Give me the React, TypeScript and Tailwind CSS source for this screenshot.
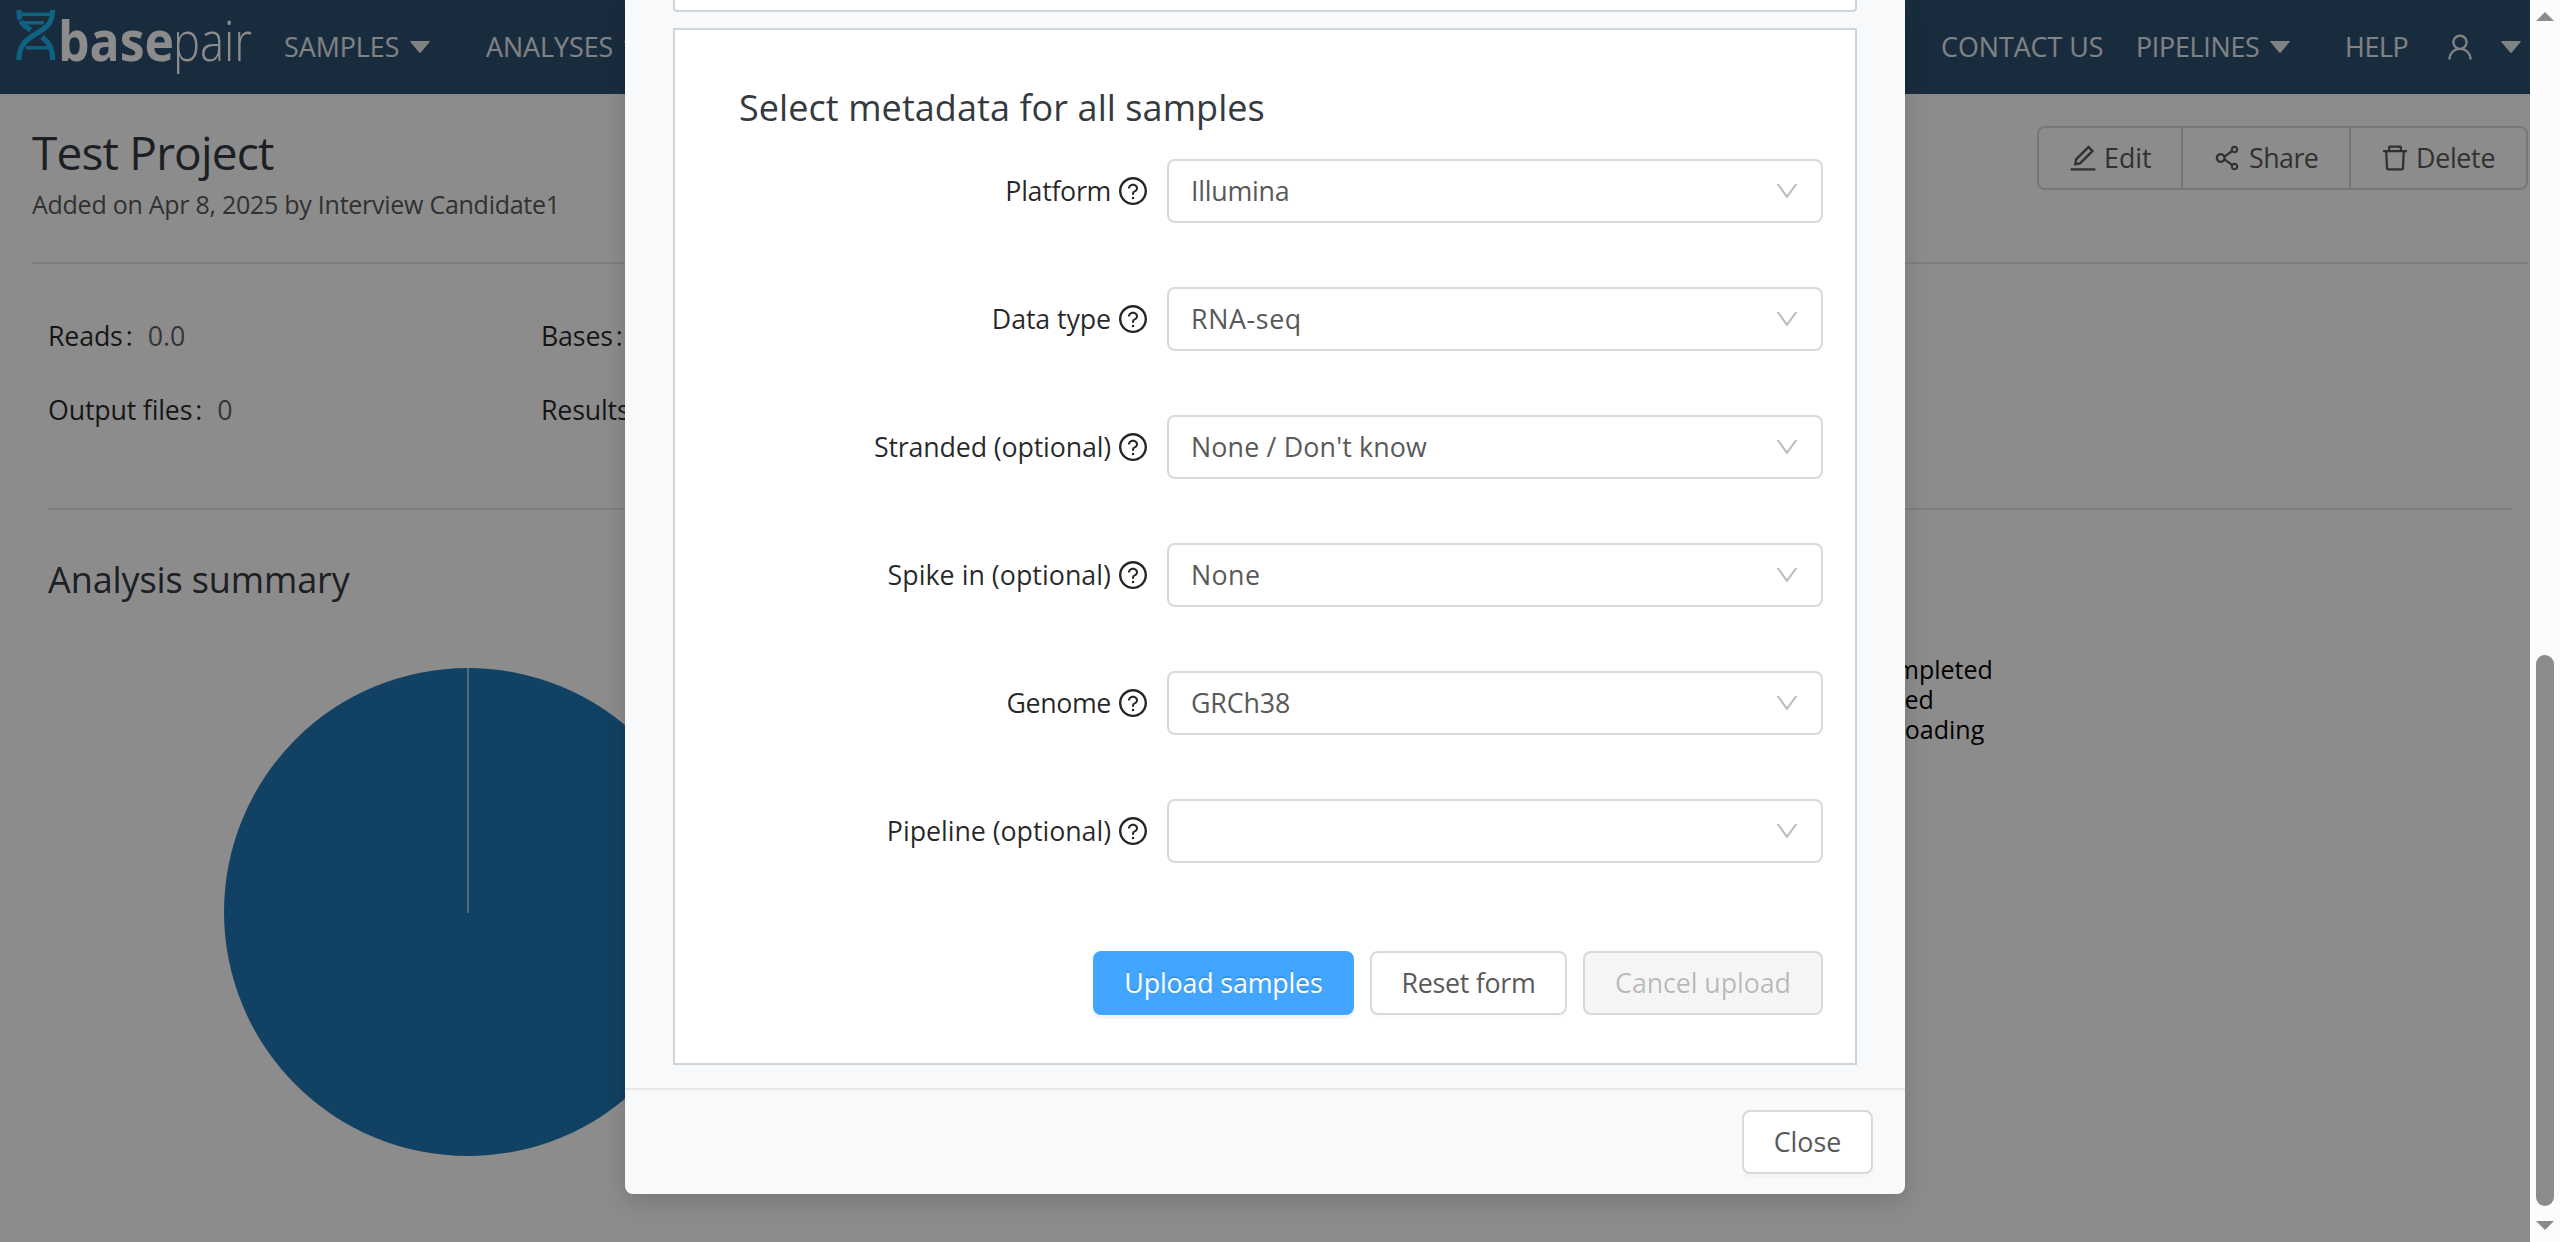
import React from "react";
import {
  AiOutlineDelete,
  AiOutlineDown,
  AiOutlineEdit,
  AiOutlineQuestionCircle,
  AiOutlineShareAlt,
  AiOutlineUser,
} from "react-icons/ai";

function Caret({ className = "" }: { className?: string }) {
  return (
    <svg className={`h-[12px] w-[20px] shrink-0 ${className}`} viewBox="0 0 20 12">
      <path d="M0.8 0H19.2Q20.2 0 19.6 0.9L10.8 11.5Q10 12.3 9.2 11.5L0.4 0.9Q-0.2 0 0.8 0Z" fill="currentColor" />
    </svg>
  );
}

function Logo() {
  return (
    <svg className="h-[94px] w-[284px] shrink-0" viewBox="0 0 284 94">
      <g fill="none" stroke="#1db2ec" strokeWidth="5.2">
        <path d="M19 10V13.5C19 16 19.8 18 20.8 19.3" />
        <path d="M52.6 10C52.6 23 47 27 38 32.5C28 38.5 18.8 44 18.8 60" />
        <path d="M20.8 21C23 25 27 27.8 30.8 30" />
        <path d="M42 37C48.5 42 52.6 47.5 52.6 60" />
        <path d="M18 14.3H52" strokeWidth="3.4" />
        <path d="M21 22.8H44" strokeWidth="3.4" />
        <path d="M26 47.8H50" strokeWidth="3.4" />
      </g>
      <text x="58" y="61" fontFamily="Open Sans, sans-serif" fontWeight="700" fontSize="55" textLength="116" lengthAdjust="spacingAndGlyphs" fill="#fff">
        base
      </text>
      <text x="173" y="61" fontFamily="Open Sans, sans-serif" fontWeight="300" fontSize="55" textLength="79" lengthAdjust="spacingAndGlyphs" fill="#fff">
        pair
      </text>
    </svg>
  );
}

function Header() {
  return (
    <header className="flex h-[94px] items-center bg-[#2f5071] text-white/90">
      <Logo />
      <nav className="flex items-center">
        <span className="flex w-[146px] items-center justify-between">
          SAMPLES <Caret />
        </span>
        <span className="ml-[56px] flex w-[158px] items-center justify-between">
          ANALYSES <Caret />
        </span>
      </nav>
      <nav className="mr-[9px] ml-auto flex items-center">
        <span className="w-[195px]">CONTACT US</span>
        <span className="flex w-[154px] items-center justify-between tracking-[-0.01em]">
          PIPELINES <Caret />
        </span>
        <span className="ml-[55px] w-[99px] tracking-[-0.013em]">HELP</span>
        <AiOutlineUser className="size-[32px]" />
        <Caret className="ml-[25px]" />
      </nav>
    </header>
  );
}

const actionBase = "flex h-[64px] items-center border-2 border-[#d9d9d9] pl-[28px]";

function Actions() {
  return (
    <div className="mt-[32px] flex">
      <button className={`${actionBase} w-[146px] gap-[5px] rounded-l-[8px]`}>
        <AiOutlineEdit className="size-[32px]" />
        Edit
      </button>
      <button className={`${actionBase} -ml-[2px] w-[170px] gap-[6px] tracking-[-0.02em]`}>
        <AiOutlineShareAlt className="size-[32px]" />
        Share
      </button>
      <button className={`${actionBase} -ml-[2px] w-[179px] gap-[5px] rounded-r-[8px] tracking-[-0.011em]`}>
        <AiOutlineDelete className="size-[32px]" />
        Delete
      </button>
    </div>
  );
}

function Stat({ label, value }: { label: string; value: string }) {
  return (
    <div className="flex w-[493px] leading-[40px]">
      <span className="tracking-[-0.007em] text-black/85">{label}</span>
      <span className="mr-[15px] ml-[3px] text-black/85">:</span>
      <span className="text-black/65">{value}</span>
    </div>
  );
}

function ProjectPage() {
  return (
    <div className="h-[1242px] w-[2530px] bg-white">
      <Header />
      <section className="mr-[2px] ml-[32px] flex h-[170px] justify-between border-b-2 border-[#e8e8e8]">
        <div className="pt-[28px]">
          <h1 className="text-[46px] leading-[60px] tracking-[-0.018em] text-[#343a40]">Test Project</h1>
          <p className="mt-[6px] text-[25px] leading-[32px] tracking-[-0.0105em]">
            Added on Apr 8, 2025 by Interview Candidate1
          </p>
        </div>
        <Actions />
      </section>
      <section className="mr-[18px] ml-[48px] h-[246px] border-b-2 border-[#e8e8e8] pt-[52px]">
        <div className="flex">
          <Stat label="Reads" value="0.0" />
          <Stat label="Bases" value="0.0" />
        </div>
        <div className="mt-[34px] flex">
          <Stat label="Output files" value="0" />
          <Stat label="Results" value="0" />
        </div>
      </section>
      <section className="pl-[48px]">
        <h2 className="pt-[45px] text-[36px] leading-[50px] tracking-[-0.003em] text-[#343a40]">Analysis summary</h2>
        <div className="mt-[49px] flex items-start pl-[176px]">
          <svg className="mt-[14px] size-[488px]" viewBox="0 0 488 488">
            <circle cx="244" cy="244" r="244" fill="#1f77b4" />
            <path d="M244 0V245" stroke="#98c0cc" strokeWidth="2" />
          </svg>
          <ul className="ml-[1153px] text-[25px] leading-[30px] text-black">
            <li>Completed</li>
            <li>Failed</li>
            <li>Uploading</li>
          </ul>
        </div>
      </section>
    </div>
  );
}

const fields = [
  { label: "Platform", value: "Illumina", labelClass: "tracking-[-0.012em]", valueClass: "tracking-[-0.009em]" },
  { label: "Data type", value: "RNA-seq", labelClass: "tracking-[-0.004em]", valueClass: "tracking-[0.023em]" },
  { label: "Stranded (optional)", value: "None / Don't know", labelClass: "tracking-[-0.006em]", valueClass: "tracking-[0.006em]" },
  { label: "Spike in (optional)", value: "None", labelClass: "tracking-[0.001em]", valueClass: "tracking-[0.015em]" },
  { label: "Genome", value: "GRCh38", labelClass: "tracking-[-0.015em]", valueClass: "tracking-[-0.005em]" },
  { label: "Pipeline (optional)", value: "", labelClass: "tracking-[-0.002em]", valueClass: "" },
];

const buttonBase = "h-[64px] rounded-[8px] border-2 text-center";

function UploadModal() {
  return (
    <div className="absolute top-0 left-[625px] flex h-[1194px] w-[1280px] flex-col rounded-b-[8px] bg-[#f8f9fb] shadow-[0_8px_24px_rgba(0,0,0,0.15)]">
      <div className="mx-[48px] h-[12px] rounded-b-[4px] border-2 border-t-0 border-[#ced4da] bg-white" />
      <div className="mx-[48px] mt-[16px] h-[1037px] border-2 border-[#ced4da] bg-white pt-[51px] pr-[32px] pl-[64px]">
        <h2 className="text-[36px] leading-[54px] tracking-[0.002em] text-[#343a40]">
          Select metadata for all samples
        </h2>
        <div className="mt-[24px] flex flex-col gap-[64px]">
          {fields.map((f) => (
            <div key={f.label} className="flex h-[64px] items-center justify-end">
              <label className={`text-black/85 ${f.labelClass}`}>{f.label}</label>
              <AiOutlineQuestionCircle className="mr-[18px] ml-[6px] size-[32px] text-black/85" />
              <div className="flex h-[64px] w-[656px] items-center justify-between rounded-[8px] border-2 border-[#d9d9d9] pr-[20px] pl-[22px]">
                <span className={f.valueClass}>{f.value}</span>
                <AiOutlineDown className="ml-auto size-[28px] text-black/25" />
              </div>
            </div>
          ))}
        </div>
        <div className="mt-[88px] flex justify-end gap-[16px]">
          <button className={`${buttonBase} w-[261px] border-[#42a5ff] bg-[#42a5ff] tracking-[-0.006em] text-white shadow-[0_4px_0_rgba(0,0,0,0.045)] [text-shadow:0_-2px_0_rgba(0,0,0,0.12)]`}>
            Upload samples
          </button>
          <button className={`${buttonBase} w-[197px] border-[#d9d9d9] tracking-[-0.01em] shadow-[0_4px_0_rgba(0,0,0,0.016)]`}>
            Reset form
          </button>
          <button className={`${buttonBase} w-[240px] border-[#d9d9d9] bg-[#f5f5f5] tracking-[-0.003em] text-black/25`}>
            Cancel upload
          </button>
        </div>
      </div>
      <footer className="mt-[23px] flex justify-end border-t-2 border-[#e8e8e8] pt-[20px] pr-[32px]">
        <button className={`${buttonBase} w-[131px] border-[#d9d9d9] bg-white shadow-[0_4px_0_rgba(0,0,0,0.016)]`}>
          Close
        </button>
      </footer>
    </div>
  );
}

function Scrollbar() {
  return (
    <div className="flex h-[1242px] w-[30px] flex-col items-center bg-[#fcfcfc] pt-[12px] pb-[12px] text-[#8b8b8b]">
      <svg className="h-[9px] w-[18px]" viewBox="0 0 18 9">
        <path d="M9 0L18 9H0Z" fill="currentColor" />
      </svg>
      <div className="mt-[634px] h-[551px] w-[18px] rounded-full bg-[#8b8b8b]" />
      <svg className="mt-auto h-[9px] w-[18px]" viewBox="0 0 18 9">
        <path d="M0 0H18L9 9Z" fill="currentColor" />
      </svg>
    </div>
  );
}

export default function App() {
  return (
    <div className="relative flex h-[1242px] w-[2560px] overflow-hidden font-['Open_Sans',sans-serif] text-[26.8px] leading-[40px] whitespace-nowrap text-[#595959]">
      <div className="relative h-[1242px] w-[2530px] overflow-hidden">
        <ProjectPage />
        <div className="absolute inset-0 bg-black/45" />
        <UploadModal />
      </div>
      <Scrollbar />
    </div>
  );
}
